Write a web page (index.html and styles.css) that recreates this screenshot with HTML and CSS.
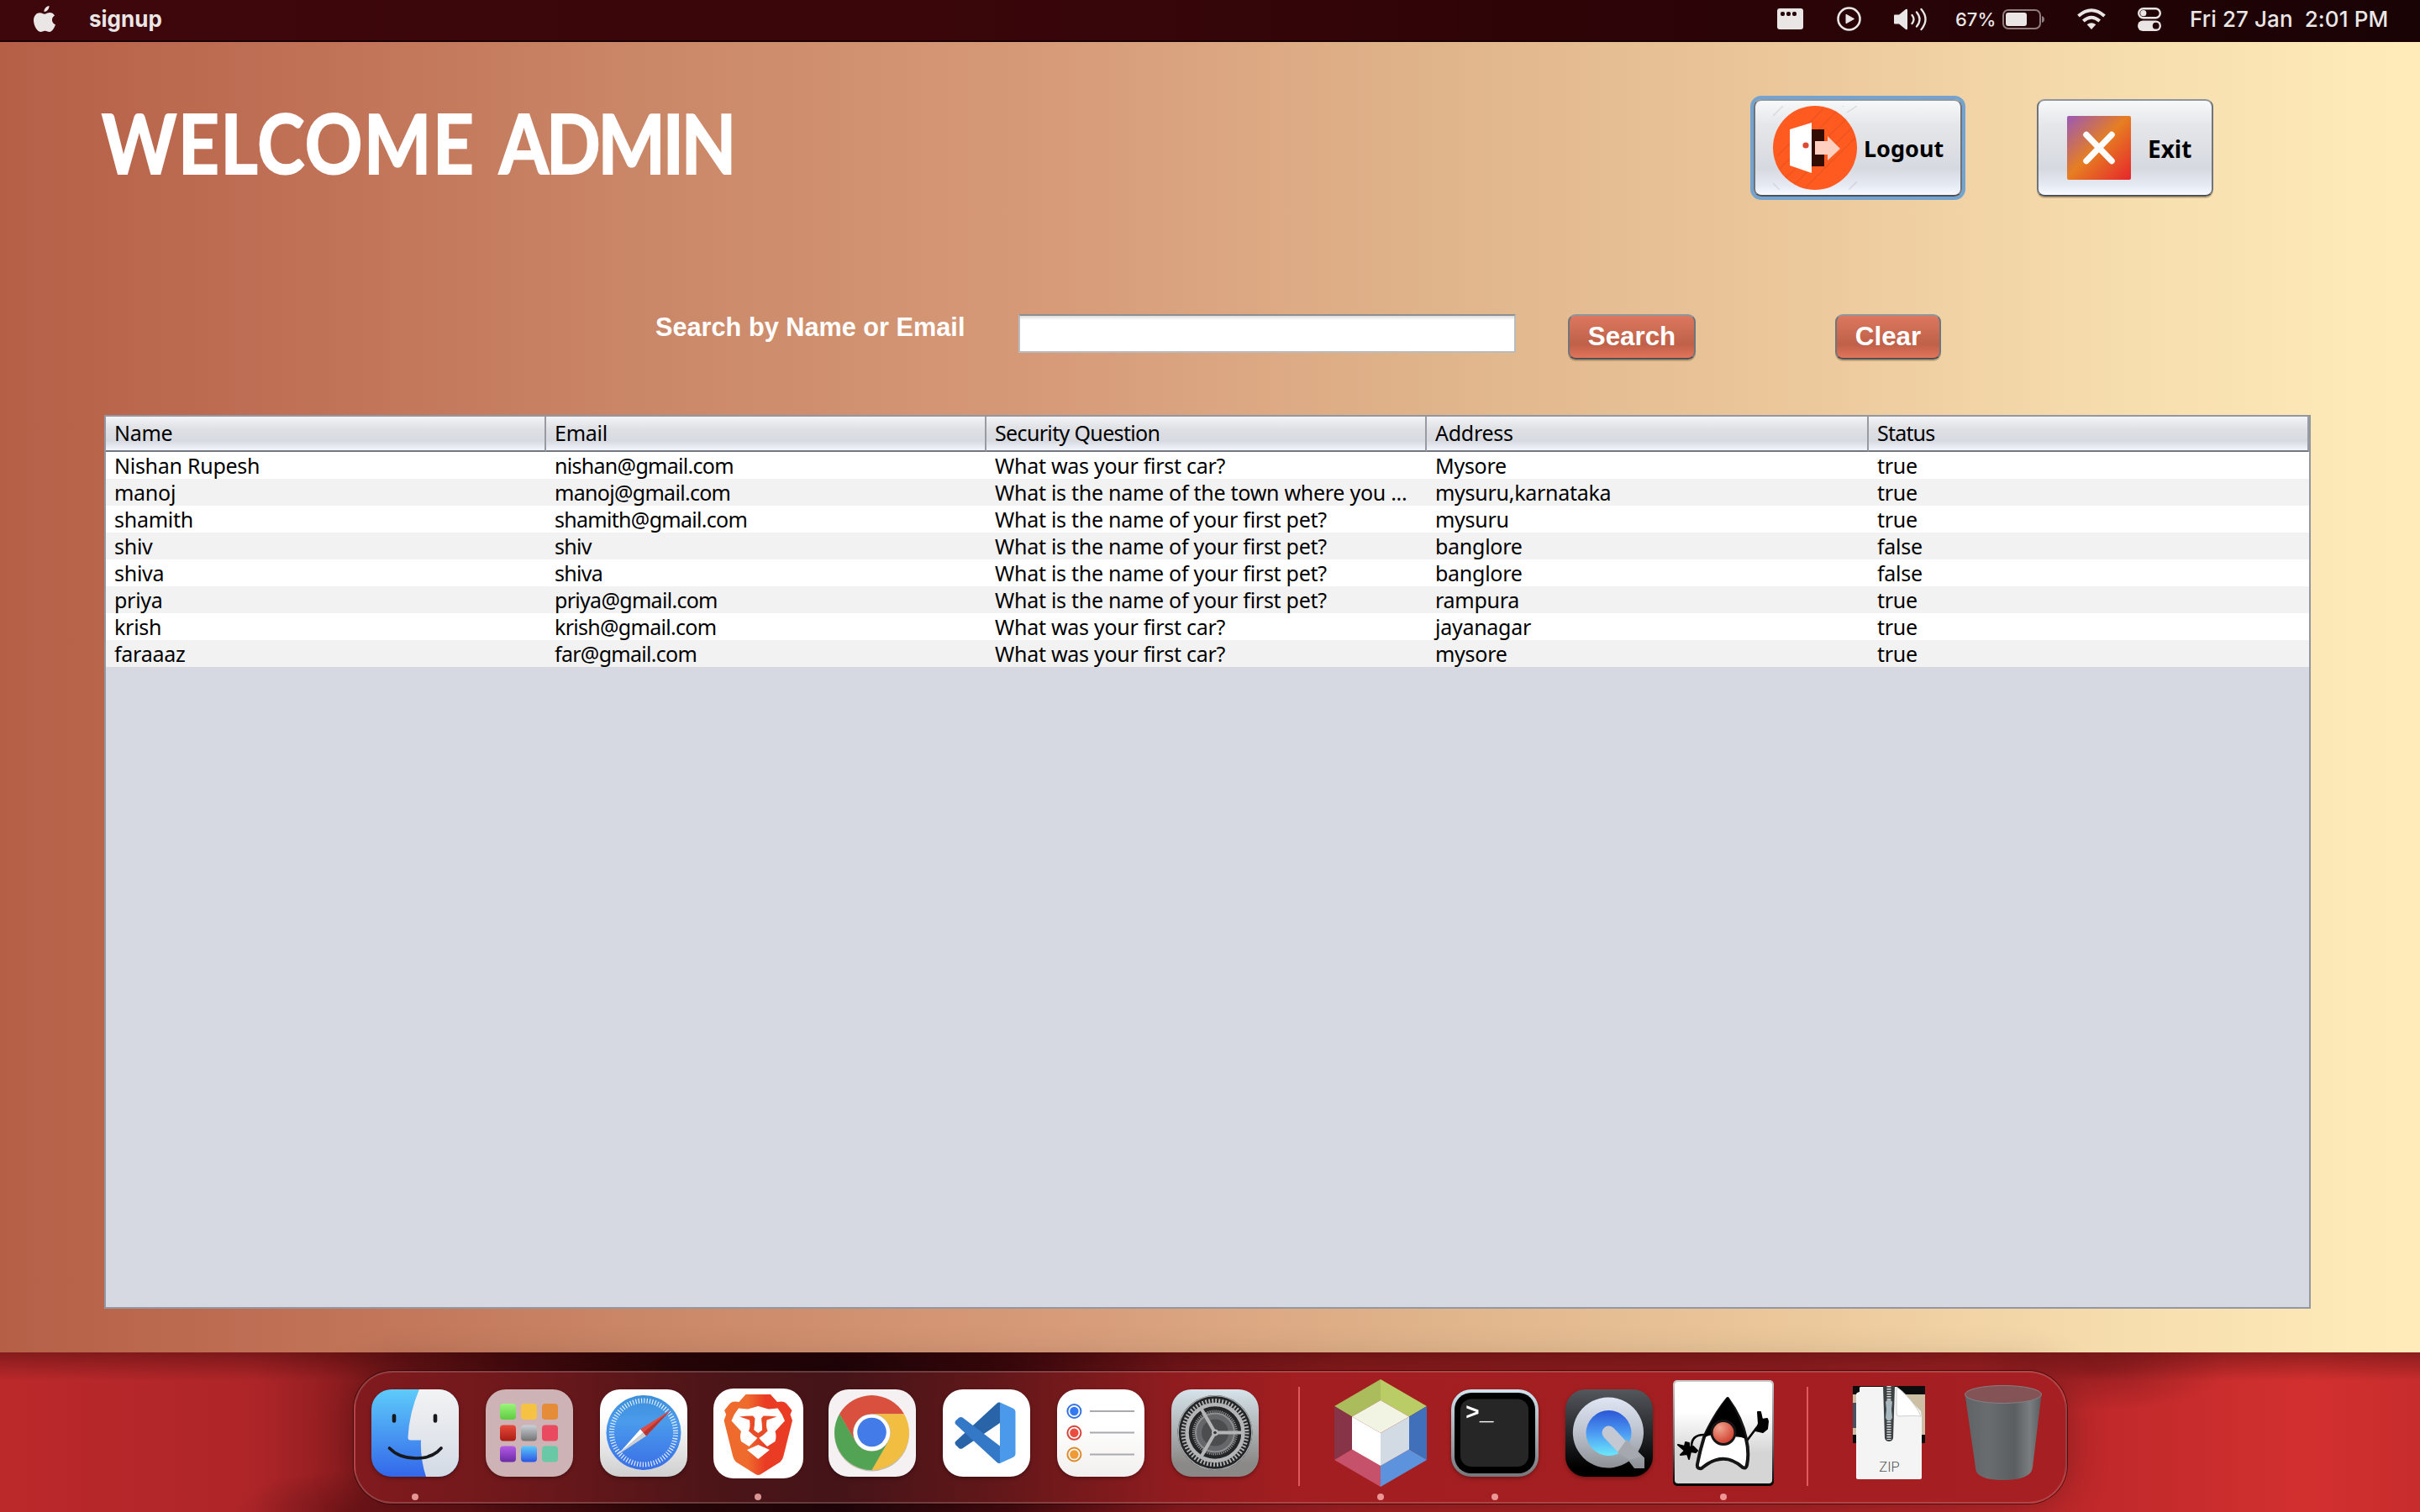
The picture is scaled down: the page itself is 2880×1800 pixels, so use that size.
FILE: index.html
```html
<!DOCTYPE html>
<html lang="en">
<head>
<meta charset="utf-8">
<title>signup</title>
<link rel="stylesheet" href="styles.css">
</head>
<body>
<header class="menubar">
  <svg class="apple" viewBox="0 0 26 32"><path d="M18.500 0c.3 3.500-2.600 7-6 7-.4-3.300 2.600-6.600 6-7zM25 11.500c-4.500 2.700-3.800 9 1 10.800-1.300 3.700-4 8.700-7 8.700-2.200 0-2.900-1.300-5.400-1.300S10.300 31 8.200 31C4.500 31 0 23.500 0 17.300 0 11.500 3.600 8.200 7.300 8.200c2.400 0 4.300 1.500 5.800 1.500 1.400 0 3.600-1.700 6.400-1.700 2 0 4.200 1 5.500 3.500z"/></svg>
  <span class="app-name">signup</span>
  <div class="status">
    <svg class="s-film" viewBox="0 0 31 25"><rect width="31" height="25" rx="3"/><g fill="#250407"><rect x="4" y="4" width="5" height="5" rx="2"/><rect x="11" y="4" width="5" height="5" rx="2"/><rect x="18" y="4" width="5" height="5" rx="2"/></g></svg>
    <svg class="s-play" viewBox="0 0 29 29"><circle cx="14.500" cy="14.500" r="13" fill="none" stroke="#ebe6e6" stroke-width="2.600"/><path d="M11 9.200v10.600l9.500-5.300z" stroke="#ebe6e6" stroke-linejoin="round"/></svg>
    <svg class="s-vol" viewBox="0 0 40 28"><path d="M1 9.500q0-1 1-1h5L15 2q2-1 2 1v22q0 2-2 1l-8-6.500H2q-1 0-1-1z"/><g fill="none" stroke="#ebe6e6" stroke-width="2.300" stroke-linecap="round"><path d="M22.500 9q4 5 0 10M28 5.500q7 8.500 0 17M33.500 2q10 12 0 24"/></g></svg>
    <span class="percent">67%</span>
    <svg class="s-bat" viewBox="0 0 50 24"><rect x="1" y="1" width="44" height="22" rx="6" fill="none" stroke="#8f7c7e" stroke-width="2"/><rect x="4" y="4" width="25" height="16" rx="3"/><path d="M47 8q3 1 3 4t-3 4z" fill="#8f7c7e"/></svg>
    <svg class="s-wifi" viewBox="0 0 34 25"><g fill="none" stroke="#ebe6e6" stroke-width="4"><path d="M1.500 9q15.500-13.500 31 0M7.300 15q9.700-8.500 19.400 0"/></g><path d="M17 25l-5.300-5.700q5.300-4.300 10.600 0z"/></svg>
    <svg class="s-cc" viewBox="0 0 28 28"><rect x="1.200" y="1.200" width="25.600" height="11" rx="5.500" fill="none" stroke="#ebe6e6" stroke-width="2.400"/><circle cx="6.800" cy="6.700" r="3.600"/><rect y="15.500" width="28" height="12.500" rx="6.200"/><circle cx="21.700" cy="21.700" r="3.900" fill="#210406"/></svg>
    <time class="clock">Fri 27 Jan&nbsp; 2:01 PM</time>
  </div>
</header>

<main class="window">
  <div class="title-row">
    <h1>WELCOME <span class="role">ADMIN</span></h1>
    <button class="metal logout">
      <svg class="ic-logout" viewBox="0 0 100 100">
        <g stroke="#000" stroke-opacity=".09" stroke-width="1.500"><path d="M0 12L12 0M0 92l8 8M88 8l12-8M90 100l10-10M82 0h3"/></g>
        <circle cx="50" cy="50" r="50" fill="#ff5a20"/>
        <g stroke="#000" stroke-opacity=".05" stroke-width="2"><path d="M5 60L60 3M8 75L76 6M15 86L88 15M25 94L94 26M38 98L98 38"/></g>
        <path d="M46 28h15v44H46z" fill="#330d02"/>
        <path d="M20 28l26-8v60l-26-9z" fill="#fff"/>
        <circle cx="39" cy="47" r="3.600" fill="#dd4b35"/>
        <path d="M50 42h15v-6l15 15-15 14v-7H50z" fill="#ffcfc0"/>
      </svg>
      <span>Logout</span>
    </button>
    <button class="metal exit">
      <svg class="ic-exit" viewBox="0 0 76 76">
        <defs><linearGradient id="exitFill" x2="1" y2="1"><stop offset="0" stop-color="#9b59b6"/><stop offset=".48" stop-color="#e67e22"/><stop offset=".97" stop-color="#e62b2b"/></linearGradient></defs>
        <rect width="76" height="76" rx="2" fill="url(#exitFill)"/>
        <path d="M23 22.500l30 31M53 22.500l-30 31" stroke="#fff" stroke-width="7.500" stroke-linecap="round"/>
      </svg>
      <span>Exit</span>
    </button>
  </div>

  <div class="search-row">
    <label for="q">Search by Name or Email</label>
    <input id="q" type="text">
    <button class="coral search">Search</button>
    <button class="coral clear">Clear</button>
  </div>

  <div class="table-pane">
    <table>
      <colgroup><col class="c"><col class="c"><col class="c"><col class="c-wide"><col class="c"></colgroup>
      <thead><tr><th>Name</th><th>Email</th><th>Security Question</th><th>Address</th><th>Status</th></tr></thead>
      <tbody>
        <tr><td>Nishan Rupesh</td><td>nishan@gmail.com</td><td>What was your first car?</td><td>Mysore</td><td>true</td></tr>
        <tr><td>manoj</td><td>manoj@gmail.com</td><td>What is the name of the town where you ...</td><td>mysuru,karnataka</td><td>true</td></tr>
        <tr><td>shamith</td><td>shamith@gmail.com</td><td>What is the name of your first pet?</td><td>mysuru</td><td>true</td></tr>
        <tr><td>shiv</td><td>shiv</td><td>What is the name of your first pet?</td><td>banglore</td><td>false</td></tr>
        <tr><td>shiva</td><td>shiva</td><td>What is the name of your first pet?</td><td>banglore</td><td>false</td></tr>
        <tr><td>priya</td><td>priya@gmail.com</td><td>What is the name of your first pet?</td><td>rampura</td><td>true</td></tr>
        <tr><td>krish</td><td>krish@gmail.com</td><td>What was your first car?</td><td>jayanagar</td><td>true</td></tr>
        <tr><td>faraaaz</td><td>far@gmail.com</td><td>What was your first car?</td><td>mysore</td><td>true</td></tr>
      </tbody>
    </table>
  </div>
</main>

<footer class="wallpaper">
  <nav class="dock">
    <div class="slot running">
      <svg class="app" viewBox="0 0 104 104">
        <defs><linearGradient id="fb" x2="0" y2="1"><stop offset="0" stop-color="#5ecbfa"/><stop offset="1" stop-color="#3367ea"/></linearGradient><linearGradient id="fw" x2="0" y2="1"><stop offset="0" stop-color="#f3f3f4"/><stop offset="1" stop-color="#d3dae5"/></linearGradient><clipPath id="sq"><rect width="104" height="104" rx="24"/></clipPath></defs>
        <g clip-path="url(#sq)"><path fill="url(#fb)" d="M0 0h104v104H0z"/><path fill="url(#fw)" d="M57 0Q45 28 43.500 57q0 3.500 3 3.500h12.500Q58 82 65 104h39V0z"/></g>
        <g fill="none" stroke="#17181b" stroke-linecap="round"><path stroke-width="4.600" d="M27 31.500v6M76 31.500v6"/><path stroke-width="3.600" d="M21.500 70Q33 82 53 82t30-12"/></g>
      </svg>
    </div>
    <div class="slot">
      <svg class="app" viewBox="0 0 104 104">
        <defs>
          <linearGradient id="lpBlue" x2="0" y2="1"><stop offset="0" stop-color="#5cc8fa"/><stop offset="1" stop-color="#2a55e4"/></linearGradient>
          <linearGradient id="lpGray" x2="0" y2="1"><stop offset="0" stop-color="#c9d0d6"/><stop offset="1" stop-color="#737373"/></linearGradient>
          <linearGradient id="lpRed" x2="0" y2="1"><stop offset="0" stop-color="#e84a3b"/><stop offset="1" stop-color="#a91d14"/></linearGradient>
          <linearGradient id="lpGreen" x2="0" y2="1"><stop offset="0" stop-color="#9cf57c"/><stop offset="1" stop-color="#5ecb40"/></linearGradient>
          <linearGradient id="lpPurple" x2="0" y2="1"><stop offset="0" stop-color="#b45be6"/><stop offset="1" stop-color="#6b2aa5"/></linearGradient>
        </defs>
        <rect width="104" height="104" rx="24" fill="#cdb3b5"/>
        <rect x="17" y="17" width="19" height="19" rx="4" fill="url(#lpGreen)"/><rect x="42" y="17" width="19" height="19" rx="4" fill="#f6c243"/><rect x="67" y="17" width="19" height="19" rx="4" fill="#e58c38"/>
        <rect x="17" y="42.500" width="19" height="19" rx="4" fill="url(#lpRed)"/><rect x="42" y="42.500" width="19" height="19" rx="4" fill="url(#lpGray)"/><rect x="67" y="42.500" width="19" height="19" rx="4" fill="#ea4a5f"/>
        <rect x="17" y="67.500" width="19" height="19" rx="4" fill="url(#lpPurple)"/><rect x="42" y="67.500" width="19" height="19" rx="4" fill="url(#lpBlue)"/><rect x="67" y="67.500" width="19" height="19" rx="4" fill="#69c9a6"/>
      </svg>
    </div>
    <div class="slot">
      <svg class="app" viewBox="0 0 104 104">
        <defs><linearGradient id="sfBg" x2="0" y2="1"><stop offset=".3" stop-color="#fff"/><stop offset="1" stop-color="#cfcfcf"/></linearGradient><linearGradient id="sfBlue" x2="0" y2="1"><stop offset="0" stop-color="#3b8fd9"/><stop offset=".35" stop-color="#4a9bec"/><stop offset="1" stop-color="#3a6fe6"/></linearGradient></defs>
        <rect width="104" height="104" rx="24" fill="url(#sfBg)"/>
        <circle cx="52" cy="51.500" r="44.500" fill="url(#sfBlue)"/>
        <circle cx="52" cy="51.500" r="38" fill="none" stroke="#fff" stroke-opacity=".85" stroke-width="6" stroke-dasharray="1.200 2.116"/>
        <path d="M84 25L48 47.500l7 8z" fill="#dd4b44"/><path d="M84 25L51.500 51.500l3.500 4z" fill="#b8352e"/>
        <path d="M21 78l27-30.500 3.500 4z" fill="#fff"/><path d="M21 78l30.500-26.500 3.500 4z" fill="#cfcfcf"/>
      </svg>
    </div>
    <div class="slot running">
      <svg class="brave" viewBox="0 0 107 107">
        <defs><linearGradient id="br" x2="1"><stop offset=".35" stop-color="#ee6a2d"/><stop offset=".6" stop-color="#ea3c24"/></linearGradient></defs>
        <rect width="107" height="107" rx="24" fill="#fff"/>
        <path fill="url(#br)" d="M38.500 7h29.500l8 9q8-2 11.500 2.500l6 7.500-2 5 2.500 7L83.500 80q-1 5-4 7.500L58 101q-4.700 4-9.400 0L27 87.500q-3-2.500-4-7.500L12.600 38l2.500-7-2-5 6-7.500Q22.500 14 30.500 16z"/>
        <path fill="#fff" d="M30 23.500l11 1 12.300-3.500 12.300 3.500 11-1Q82 30 85 38.500L73.500 51q2 6 0 12L64 69l-7.500-7.500q-2-2-3.200-4.500-1.200 2.500-3.200 4.500L42.500 69 33 63q-2-6 0-12L21.500 38.500Q24.500 30 30 23.500z"/>
        <path fill="#ea4b27" d="M31 33.500q8-1 16-1l2.500 3-1 14 4.800 3.500 4.800-3.500-1-14 2.500-3q8 0 16 1l-12 4q-1.500 8 1 13l-6 5.500-5.300 3.500-5.300-3.500-6-5.500q2.500-5 1-13z"/>
        <path fill="#fff" d="M50 36h6.600l1.500 13-4.800 3.500-4.800-3.500zM40 73l13.300-6L67 73 53.300 84z"/>
      </svg>
    </div>
    <div class="slot">
      <svg class="app" viewBox="0 0 104 104">
        <rect width="104" height="104" rx="24" fill="#f5f1f3"/>
        <circle cx="51.500" cy="53" r="44.500" fill="#8f8a6a" opacity=".5"/>
        <path fill="#d9503f" d="M13 29.300A44.500 44.500 0 0 1 90 29.300H51.500A22.200 22.200 0 0 0 32.200 62.600z"/>
        <path fill="#f2be42" d="M90 29.300A44.500 44.500 0 0 1 51.500 96L70.800 62.600A22.200 22.200 0 0 0 51.500 29.300z"/>
        <path fill="#52a354" d="M51.500 96A44.500 44.500 0 0 1 13 29.300L32.200 62.600A22.200 22.200 0 0 0 70.800 62.600z"/>
        <circle cx="51.500" cy="51.500" r="21.800" fill="#fff"/><circle cx="51.500" cy="51" r="17.300" fill="#437be8"/>
      </svg>
    </div>
    <div class="slot">
      <svg class="app" viewBox="0 0 104 104">
        <rect width="104" height="104" rx="24" fill="#fff"/>
        <path fill="#2963a8" d="M68 15.600V40L23.500 70.300q-2 1-4 0l-4-4q-2-2.500 0-4.500L64 17q2-1.800 4-1.400z"/>
        <path fill="#3478c8" d="M68 88V67.500L23.500 33.500q-2-1-4 0l-4 3.700q-2 2.500 0 4.500L64 86.500q2 1.800 4 1.500z"/>
        <path fill="#4b99ea" d="M68 15.600l16 7.200q2.500 1.300 2.500 4v50q0 2.700-2.500 4L68 88z"/>
      </svg>
    </div>
    <div class="slot">
      <svg class="app" viewBox="0 0 104 104">
        <defs><linearGradient id="rm" x2="0" y2="1"><stop offset=".4" stop-color="#fff"/><stop offset="1" stop-color="#f2f0ee"/></linearGradient></defs>
        <rect width="104" height="104" rx="24" fill="url(#rm)"/>
        <g fill="none" stroke-width="2"><circle cx="20.400" cy="26" r="8" stroke="#3573e0"/><circle cx="20.400" cy="51.800" r="8" stroke="#d8433a"/><circle cx="20.400" cy="77.500" r="8" stroke="#dd8a2b"/></g>
        <circle cx="20.400" cy="26" r="5.200" fill="#3478f6"/><circle cx="20.400" cy="51.800" r="5.200" fill="#ea4d3f"/><circle cx="20.400" cy="77.500" r="5.200" fill="#ee9a37"/>
        <path stroke="#a9a9b0" stroke-width="2" d="M39 26h53M39 51.500h53M39 77.500h53"/>
      </svg>
    </div>
    <div class="slot">
      <svg class="app" viewBox="0 0 104 104">
        <defs><linearGradient id="st" x2="0" y2="1"><stop offset="0" stop-color="#d6e3ea"/><stop offset=".85" stop-color="#8b8987"/></linearGradient></defs>
        <rect width="104" height="104" rx="24" fill="url(#st)"/>
        <circle cx="52" cy="51.500" r="44.500" fill="#232526"/><circle cx="52" cy="51.500" r="43.800" fill="none" stroke="#a9adaf" stroke-width="1.300"/>
        <circle cx="52" cy="51.500" r="38" fill="none" stroke="#b3b5b6" stroke-width="5" stroke-dasharray="1.900 2.078"/>
        <circle cx="52" cy="51.500" r="33.500" fill="none" stroke="#b3b5b6" stroke-width="4.500"/>
        <circle cx="52" cy="51.500" r="25.500" fill="#2b2d2e" stroke="#8e9091" stroke-width="3" stroke-dasharray="1.200 1.200"/>
        <circle cx="52" cy="51.500" r="23" fill="#65676a" stroke="#8e9091" stroke-width="2"/>
        <circle cx="52" cy="51.500" r="16" fill="#4b4d4f"/>
        <path stroke="#b3b5b6" stroke-width="4" d="M52 51.500h32M52 51.500L36 23.800M52 51.500L36 79.200"/>
        <circle cx="52" cy="51.500" r="4" fill="#b3b5b6"/><circle cx="52" cy="51.500" r="1.800" fill="#333"/>
      </svg>
    </div>
    <span class="divider"></span>
    <div class="slot running">
      <svg class="cube" viewBox="0 0 110 128">
        <path fill="#abbc5c" d="M55 0v25L21 44.500 0 32z"/><path fill="#b9cc65" d="M55 0v25l34 19.500L110 32z"/>
        <path fill="#873449" d="M0 32l21 12.500v39L0 96z"/><path fill="#4170ba" d="M110 32L89 44.500v39L110 96z"/>
        <path fill="#c6516a" d="M0 96l21-12.500L55 103v25z"/><path fill="#5d92dc" d="M110 96L89 83.500 55 103v25z"/>
        <path fill="#f1f3e3" d="M55 25l34 19.500L55 64 21 44.500z"/><path fill="#fff" d="M21 44.500L55 64v39L21 83.500z"/><path fill="#d2dae4" d="M89 44.500L55 64v39l34-19.500z"/>
      </svg>
    </div>
    <div class="slot running">
      <svg class="app" viewBox="0 0 104 104">
        <defs><linearGradient id="tm" x2="0" y2="1"><stop offset="0" stop-color="#cfe3ee"/><stop offset="1" stop-color="#77777a"/></linearGradient></defs>
        <rect width="104" height="104" rx="24" fill="url(#tm)"/><rect x="4" y="4" width="96" height="96" rx="20" fill="#000"/><rect x="11" y="11.500" width="81" height="80.500" rx="13" fill="#262626"/>
        <text class="prompt" x="17" y="36">&gt;_</text>
      </svg>
    </div>
    <div class="slot">
      <svg class="app" viewBox="0 0 104 104">
        <defs><linearGradient id="qb" x2="0" y2="1"><stop offset="0" stop-color="#54575d"/><stop offset=".9" stop-color="#000"/></linearGradient><linearGradient id="qs" x2="0" y2="1"><stop offset="0" stop-color="#dfe5f2"/><stop offset=".4" stop-color="#c4c9d6"/><stop offset="1" stop-color="#8c9095"/></linearGradient><linearGradient id="qi" x2="0" y2="1"><stop offset="0" stop-color="#2c56d6"/><stop offset=".5" stop-color="#4c9af3"/><stop offset="1" stop-color="#6ce8fb"/></linearGradient></defs>
        <rect width="104" height="104" rx="24" fill="url(#qb)"/>
        <path fill="url(#qs)" d="M51 9.500a42 42 0 0 1 35.500 64.500L94 81.500V94H82l-6.500-8.500A42 42 0 1 1 51 9.500z"/>
        <circle cx="51.500" cy="52" r="27" fill="url(#qi)"/>
        <path stroke="#c3c8d2" stroke-width="16" stroke-linecap="round" d="M51.500 51.500l16 17"/><path fill="#a5a9af" d="M73 59.500L90 80l-14 4-14-9z"/>
      </svg>
    </div>
    <div class="slot running">
      <svg class="duke" viewBox="0 0 120 126">
        <defs><linearGradient id="jb" x2="0" y2="1"><stop offset="0" stop-color="#c9c9c9"/><stop offset=".6" stop-color="#6b6b6b"/><stop offset="1" stop-color="#000"/></linearGradient><linearGradient id="jw" x2="0" y2="1"><stop offset=".3" stop-color="#fff"/><stop offset=".7" stop-color="#d5d5d5"/></linearGradient><radialGradient id="jn" cx=".35" cy=".3" r=".8"><stop offset="0" stop-color="#f0a590"/><stop offset="1" stop-color="#cc3020"/></radialGradient></defs>
        <rect width="120" height="126" rx="5" fill="url(#jb)"/><rect x="2" y="2" width="116" height="121" rx="4" fill="url(#jw)"/>
        <path fill="none" stroke="#000" stroke-width="2.600" d="M37 65q-15 0-15 14M88 72l12-16"/>
        <path fill="#000" stroke="#000" stroke-width="2" stroke-linejoin="round" d="M6 77l8 2 1-5 4 1v5l5-1 5 5-2 2-6-1-2 9-2-6-8 1 5-5zM101 38l3 0 2 9 6-1 1 3-1 9-5 4-9-2 4-8z"/>
        <path fill="#fff" stroke="#151515" stroke-width="4" stroke-linejoin="round" d="M65 22Q50 40 37 68q-5 16-8 32-1 6 5 5 26-22 49-1 4 2 5-3 3-15-1-31Q82 45 65 22z"/>
        <path fill="#000" d="M65 20Q50 40 36 69q10-7 25 0 16-4 26 1Q80 45 65 20z"/>
        <circle cx="60" cy="62.500" r="14" fill="url(#jn)" stroke="#151515" stroke-width="3"/>
      </svg>
    </div>
    <span class="divider"></span>
    <div class="slot">
      <svg class="zip" viewBox="0 0 86 112">
        <path fill="#0c0c0c" d="M0 0h86v68H0z"/><path fill="#cdbfa4" d="M0 10h86v48H0z"/><path fill="#46505e" d="M0 20h5v30H0z"/>
        <path fill="#f4f4f4" d="M9 1h43l29 29 1 8v71q0 2-2 2H6q-2 0-2-2V10q0-2 4-3V2z"/><path fill="#fff" stroke="#d0d0d0" d="M52 1q12 8 25 27l4 8q-8-1-26 0-3 0-3-4z"/>
        <path fill="#3c4043" d="M36 0h14l-2 62q-1 4-5 4t-5-4z"/><path stroke="#d9dddd" stroke-width="5" stroke-dasharray="1.500 1.500" d="M43 0v64"/><path fill="#a9b7bf" d="M39 19q4-6 8 0l-1 9 1 10q-4 7-8 0l1-10z"/>
        <text class="zip-label" x="43.500" y="102" text-anchor="middle">ZIP</text>
      </svg>
    </div>
    <div class="slot">
      <svg class="trash" viewBox="0 0 92 114">
        <defs><linearGradient id="tr" x2="1"><stop offset="0" stop-color="#606366"/><stop offset=".3" stop-color="#6a6d70"/><stop offset=".65" stop-color="#5a5e61"/><stop offset=".85" stop-color="#7b7e81"/><stop offset="1" stop-color="#5a5d60"/></linearGradient></defs>
        <path fill="url(#tr)" d="M.500 11h91L81 98q-2 15-35 15T13 98z"/><ellipse cx="46" cy="11" rx="45.500" ry="10.500" fill="#835356" stroke="#808386"/>
      </svg>
    </div>
  </nav>
</footer>
</body>
</html>
```

FILE: styles.css
```css
* { box-sizing: border-box; }

body {
  margin: 0;
  width: 2880px;
  height: 1800px;
  overflow: hidden;
  display: flex;
  flex-direction: column;
  font-family: "Noto Sans", "Open Sans", sans-serif;
}

svg { display: block; flex: none; }

button { font: inherit; padding: 0; margin: 0; border: 0; }

/* Menu bar */
.menubar {
  height: 50px;
  flex: none;
  display: flex;
  align-items: center;
  padding: 0 38px 3px 40px;
  background: linear-gradient(90deg, #3d070b, #3b060a 35%, #2a0407 75%, #190305);
  border-bottom: 2px solid #1a0204;
  color: #ebe6e6;
  fill: #ebe6e6;
  font: 500 26px/1 Inter, sans-serif;
}

.apple { width: 26px; height: 32px; }
.app-name { margin-left: 40px; font-weight: 700; }
.status { margin-left: auto; display: flex; align-items: center; }
.s-film { width: 31px; height: 25px; margin-right: 40px; }
.s-play { width: 29px; height: 29px; margin-right: 38px; }
.s-vol { width: 40px; height: 28px; margin-right: 34px; }
.percent { font-size: 22px; width: 56px; }
.s-bat { width: 50px; height: 24px; margin-right: 39px; }
.s-wifi { width: 34px; height: 25px; margin-right: 38px; }
.s-cc { width: 28px; height: 28px; margin-right: 34px; }
.clock { width: 236px; white-space: nowrap; letter-spacing: .1px; }

/* Application window */
.window {
  height: 1560px;
  flex: none;
  padding: 0 124px;
  background: linear-gradient(90deg, #b55f47 0, #c3775b 480px, #ca8767 760px, #cf8f6e 960px, #d79b79 1260px, #e0b48b 1700px, #ecc99c 2160px, #f6ddae 2520px, #ffebba 2860px);
}

.title-row {
  height: 324px;
  display: flex;
  align-items: flex-start;
}

h1 {
  margin: 65px auto 0 -3px;
  font: 700 97px/110px Lato, sans-serif;
  color: #fff;
  white-space: nowrap;
  letter-spacing: 1.900px;
  word-spacing: 7px;
  -webkit-text-stroke: 2px #fff;
  transform: scaleX(.876);
  transform-origin: left;
}

.role { letter-spacing: -3.500px; }

.metal {
  height: 116px;
  margin-top: 68px;
  display: flex;
  align-items: center;
  border: 2px solid;
  border-color: #8f979d #6d747c #4d5258;
  border-radius: 9px;
  background: linear-gradient(#f7f8fa, #e6e7ea 25%, #d6d9e0 72%, #e6eaf3 90%, #f8faff);
  color: #000;
  font: 700 27px/1 "Noto Sans", sans-serif;
}

.metal span { padding-top: 1px; }

.logout {
  width: 248px;
  padding-left: 21px;
  gap: 8px;
  box-shadow: 0 0 0 4px #73a4d1;
}

.exit {
  width: 210px;
  margin-left: 89px;
  margin-right: 122px;
  padding-left: 34px;
  gap: 20px;
  font-size: 28px;
  box-shadow: 0 2px 0 rgba(120, 90, 50, .35);
}

.ic-logout { width: 100px; height: 100px; }
.ic-exit { width: 76px; height: 76px; }

.search-row {
  height: 56px;
  display: flex;
  align-items: flex-start;
  padding-left: 656px;
  font-family: "Liberation Sans", Arial, sans-serif;
  font-weight: 700;
  color: #fff;
}

label { width: 432px; font-size: 30.700px; line-height: 31px; }

input {
  width: 592px;
  height: 46px;
  border: 2px solid #b9bcbf;
  border-top-color: #8d8f91;
  background: linear-gradient(#dcdcdc, #fff 5px);
}

.coral {
  height: 54px;
  border: 2px solid;
  border-color: #8f979a #6e767c #4c5258;
  border-radius: 9px;
  background: linear-gradient(#dd775f, #c86850 45%, #bf6048 68%, #e2745b);
  box-shadow: 0 2px 0 rgba(120, 90, 50, .35);
  color: #fff;
  font-size: 31.300px;
}

.search { width: 152px; margin-left: 62px; }
.clear { width: 126px; margin-left: 166px; }

.table-pane {
  width: 2626px;
  height: 1064px;
  margin-top: 64px;
  border: 2px solid #9297a1;
  background: #d6d9e1;
}

table {
  width: 100%;
  table-layout: fixed;
  border-spacing: 0;
  font-size: 25px;
  letter-spacing: -.27px;
  color: #000;
}

.c { width: 524px; }
.c-wide { width: 526px; }

th, td {
  height: 32px;
  padding: 0 0 0 10px;
  text-align: left;
  font-weight: 400;
  line-height: 32px;
  white-space: nowrap;
}

td:nth-child(2) { letter-spacing: -.7px; }

th {
  height: 42px;
  padding-bottom: 2px;
  border-bottom: 2px solid #73777f;
  border-right: 2px solid #989ba1;
  background: linear-gradient(#f3f4f6, #e0e1e5 35%, #d6d9e0 72%, #f2f5fd);
}

th:nth-child(3) { letter-spacing: -.65px; }
th:nth-child(5) { letter-spacing: -.8px; }

td { background: #fff; }
tr:nth-child(even) td { background: #f2f2f2; }

/* Desktop strip and dock */
.wallpaper {
  height: 190px;
  flex: none;
  padding: 22px 420px 0 421px;
  background:
    linear-gradient(rgba(30, 0, 0, .35), transparent 34px),
    radial-gradient(140px 50px at 420px 190px, rgba(50, 5, 10, .35), transparent),
    radial-gradient(150px 50px at 2500px 20px, rgba(90, 15, 18, .4), transparent),
    linear-gradient(90deg, #bc292b 0, #ae2528 300px, #8c1c1f 420px, #560e12 600px, #2c0609 800px, #22050a 1000px, #450a0f 1200px, #8d1b1f 1400px, #a52124 1600px, #ad2427 2100px, #c1292b 2500px, #d2302f 2750px, #c82c2d 2880px);
}

.dock {
  height: 158px;
  display: flex;
  align-items: center;
  padding: 0 3px 10px;
  border: 2px solid rgba(255, 255, 255, .17);
  border-radius: 46px;
  background: linear-gradient(90deg, #811a1e, #6d181b 10%, #4c1518 21%, #441418 28%, #601719 37%, #901c1f 48%, #a21e20 55%, #a61f22);
  box-shadow: 0 0 0 1px rgba(30, 0, 0, .6), 0 0 50px rgba(0, 0, 0, .3);
}

.slot {
  position: relative;
  width: 136px;
  height: 150px;
  flex: none;
  display: flex;
  align-items: center;
  justify-content: center;
}

.running::after {
  content: "";
  position: absolute;
  left: 64px;
  top: 147px;
  width: 8px;
  height: 8px;
  border-radius: 50%;
  background: rgba(255, 180, 180, .8);
}

.app { width: 104px; height: 104px; filter: drop-shadow(0 2px 2px rgba(0, 0, 0, .3)); }
.brave { width: 107px; height: 107px; }
.cube { width: 110px; height: 128px; }
.duke { width: 120px; height: 126px; }
.zip { width: 86px; height: 112px; }
.trash { width: 92px; height: 114px; }

.prompt { font: 700 28px "Liberation Mono", monospace; fill: #fff; }
.zip-label { font: 300 16.500px Roboto, sans-serif; fill: #555; }

.divider {
  width: 2px;
  height: 118px;
  margin: 8px 28px 0 31px;
  background: #e05a5c;
}
```
